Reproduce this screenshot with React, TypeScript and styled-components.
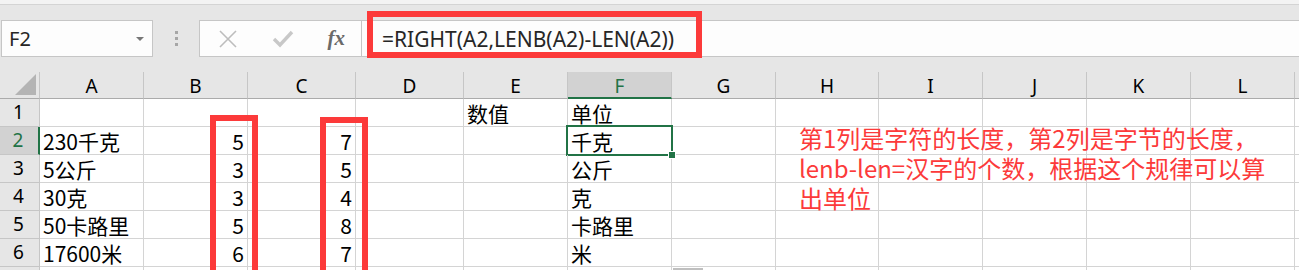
import styled, { createGlobalStyle } from "styled-components";

const GlobalStyle = createGlobalStyle`
  html, body {
    margin: 0;
    padding: 0;
    background: #ffffff;
  }
  body {
    font-family: "Noto Sans", "Noto Sans CJK SC", sans-serif;
  }
`;

const GREEN = "#217346";
const RED = "#fc3a3a";

// 列宽 (含右侧网格线)
const colWidths = [40, 104, 104, 108, 108, 104, 104, 104, 103, 104, 104, 104, 104];
const letters = ["A", "B", "C", "D", "E", "F", "G", "H", "I", "J", "K", "L", ""];

type Row = { a?: string; b?: string; c?: string; e?: string; f?: string };

const rows: Row[] = [
    { e: "数值", f: "单位" },
    { a: "230千克", b: "5", c: "7", f: "千克" },
    { a: "5公斤", b: "3", c: "5", f: "公斤" },
    { a: "30克", b: "3", c: "4", f: "克" },
    { a: "50卡路里", b: "5", c: "8", f: "卡路里" },
    { a: "17600米", b: "6", c: "7", f: "米" },
    {},
];

export default function App() {
    return (
        <Page>
            <GlobalStyle />
            <TopStrip />
            <FormulaRow>
                <NameBox>
                    <span>F2</span>
                    <DropArrow />
                </NameBox>
                <Grip>
                    <i />
                    <i />
                    <i />
                </Grip>
                <FxButtons>
                    <svg width="20" height="20" viewBox="0 0 20 20">
                        <path d="M2 2 L18 18 M18 2 L2 18" stroke="#bdbdbd" strokeWidth="1.6" fill="none" />
                    </svg>
                    <svg width="22" height="20" viewBox="0 0 22 20">
                        <path d="M2 10 L8 16 L20 3" stroke="#c8c8c8" strokeWidth="3.4" fill="none" />
                    </svg>
                    <FxLabel>fx</FxLabel>
                </FxButtons>
                <FormulaInput>
                    <FormulaText>=RIGHT(A2,LENB(A2)-LEN(A2))</FormulaText>
                    <FormulaMark />
                </FormulaInput>
            </FormulaRow>

            <SheetWrap>
                <Sheet>
                    <Corner>
                        <svg width="21" height="21" viewBox="0 0 21 21">
                            <polygon points="21,0 21,21 0,21" fill="#b4b4b4" />
                        </svg>
                    </Corner>
                    {letters.map((l, i) => (
                        <ColHeader key={"h" + i} $active={l === "F"}>
                            {l}
                        </ColHeader>
                    ))}

                    {rows.map((r, ri) => {
                        const n = ri + 1;
                        return [
                            <RowHeader key={"r" + n} $active={n === 2}>
                                {n < 7 ? n : ""}
                            </RowHeader>,
                            <Cell key={n + "a"}>{r.a}</Cell>,
                            <Cell key={n + "b"} $right>
                                {r.b}
                            </Cell>,
                            <Cell key={n + "c"} $right>
                                {r.c}
                            </Cell>,
                            <Cell key={n + "d"} />,
                            <Cell key={n + "e"}>{r.e}</Cell>,
                            <Cell key={n + "f"} $selected={n === 2}>
                                {r.f}
                            </Cell>,
                            <Cell key={n + "g"} />,
                            <Cell key={n + "h"} />,
                            <Cell key={n + "i"} />,
                            <Cell key={n + "j"} />,
                            <Cell key={n + "k"} />,
                            <Cell key={n + "l"} />,
                            <Cell key={n + "m"} />,
                        ];
                    })}
                </Sheet>

                <RedBox $left={210} $top={43} />
                <RedBox $left={320} $top={45} />
                <Note>
                    <div>第1列是字符的长度，第2列是字节的长度，</div>
                    <div>lenb-len=汉字的个数，根据这个规律可以算</div>
                    <div>出单位</div>
                </Note>
                <QuickTab />
            </SheetWrap>
        </Page>
    );
}

const Page = styled.div`
    width: 1299px;
    height: 270px;
    overflow: hidden;
    background: #e6e6e6;
    display: flex;
    flex-direction: column;
`;

const TopStrip = styled.div`
    flex-shrink: 0;
    height: 4px;
    background: #f3f3f3;
    border-bottom: 1px solid #d4d4d4;
`;

const FormulaRow = styled.div`
    flex-shrink: 0;
    display: flex;
    align-items: stretch;
    height: 37px;
    padding: 15px 0 15px 1px;
    background: #e6e6e6;
`;

const NameBox = styled.div`
    box-sizing: border-box;
    width: 152px;
    display: flex;
    align-items: center;
    justify-content: space-between;
    padding: 0 8px 0 7px;
    background: #fdfdfd;
    border: 1px solid #c6c6c6;
    font-family: "Noto Sans", sans-serif;
    font-size: 20px;
    color: #262626;
`;

const DropArrow = styled.span`
    width: 0;
    height: 0;
    border-left: 4px solid transparent;
    border-right: 4px solid transparent;
    border-top: 4px solid #777777;
`;

const Grip = styled.div`
    width: 46px;
    display: flex;
    flex-direction: column;
    align-items: center;
    justify-content: center;
    gap: 3px;

    i {
        width: 3px;
        height: 3px;
        background: #a6a6a6;
    }
`;

const FxButtons = styled.div`
    box-sizing: border-box;
    width: 163px;
    display: flex;
    align-items: center;
    justify-content: space-between;
    padding: 0 16px 0 18px;
    background: #fdfdfd;
    border: 1px solid #c6c6c6;
`;

const FxLabel = styled.span`
    font-family: "Liberation Serif", serif;
    font-style: italic;
    font-weight: bold;
    font-size: 21px;
    color: #6a6a6a;
`;

const FormulaInput = styled.div`
    position: relative;
    flex: 1;
    display: flex;
    align-items: center;
    padding-left: 20px;
    background: #fdfdfd;
    border-top: 1px solid #c6c6c6;
    border-bottom: 1px solid #c6c6c6;
`;

const FormulaText = styled.span`
    font-family: "Noto Sans", sans-serif;
    font-size: 21px;
    color: #262626;
`;

const FormulaMark = styled.div`
    position: absolute;
    left: 5px;
    top: -10px;
    width: 335px;
    height: 47px;
    box-sizing: border-box;
    border: 6px solid ${RED};
`;

const SheetWrap = styled.div`
    position: relative;
    flex: 1;
    min-height: 0;
    overflow: hidden;
    background: #ffffff;
`;

const Sheet = styled.div`
    display: grid;
    grid-template-columns: ${colWidths.map((w) => w + "px").join(" ")} 1fr;
    grid-template-rows: 27px repeat(7, 28px);
`;

const Corner = styled.div`
    box-sizing: border-box;
    background: #e6e6e6;
    border-right: 1px solid #c6c6c6;
    border-bottom: 1px solid #ababab;
    display: flex;
    align-items: flex-end;
    justify-content: flex-end;
    padding: 0 3px 3px 0;
`;

const ColHeader = styled.div<{ $active?: boolean }>`
    box-sizing: border-box;
    display: flex;
    align-items: center;
    justify-content: center;
    padding-top: 2px;
    background: ${(p) => (p.$active ? "#d2d2d2" : "#e6e6e6")};
    color: ${(p) => (p.$active ? GREEN : "#000")};
    border-right: 1px solid #c6c6c6;
    border-bottom: ${(p) => (p.$active ? `2px solid ${GREEN}` : "1px solid #ababab")};
    font-family: "Noto Sans", sans-serif;
    font-size: 19px;
`;

const RowHeader = styled.div<{ $active?: boolean }>`
    box-sizing: border-box;
    display: flex;
    align-items: flex-end;
    justify-content: center;
    padding: 0 2px 1px 0;
    background: ${(p) => (p.$active ? "#d2d2d2" : "#e6e6e6")};
    color: ${(p) => (p.$active ? GREEN : "#000")};
    border-right: ${(p) => (p.$active ? `2px solid ${GREEN}` : "1px solid #c6c6c6")};
    border-bottom: 1px solid #c6c6c6;
    font-family: "Noto Sans", sans-serif;
    font-size: 19px;
`;

const Cell = styled.div<{ $right?: boolean; $selected?: boolean }>`
    position: relative;
    box-sizing: border-box;
    display: flex;
    align-items: flex-end;
    justify-content: ${(p) => (p.$right ? "flex-end" : "flex-start")};
    padding: 0 3px 0 3px;
    border-right: 1px solid #d4d4d4;
    border-bottom: 1px solid #d4d4d4;
    font-family: "Noto Sans CJK SC", "Noto Sans", sans-serif;
    font-size: 21px;
    line-height: 26px;
    color: #000;
    white-space: nowrap;

    ${(p) =>
        p.$selected &&
        `
        &::after {
            content: "";
            position: absolute;
            left: -2px;
            top: -2px;
            right: -2px;
            bottom: -2px;
            border: 2px solid ${GREEN};
        }
        &::before {
            content: "";
            position: absolute;
            right: -5px;
            bottom: -5px;
            width: 6px;
            height: 6px;
            background: ${GREEN};
            border: 1px solid #fff;
            z-index: 2;
        }
    `}
`;

const RedBox = styled.div<{ $left: number; $top: number }>`
    position: absolute;
    left: ${(p) => p.$left}px;
    top: ${(p) => p.$top}px;
    width: 48px;
    height: 170px;
    box-sizing: border-box;
    border: 6px solid ${RED};
`;

const Note = styled.div`
    position: absolute;
    left: 799px;
    top: 51px;
    font-family: "Noto Sans CJK SC", sans-serif;
    font-size: 24px;
    line-height: 30px;
    color: ${RED};
    white-space: nowrap;
`;

const QuickTab = styled.div`
    position: absolute;
    left: 673px;
    top: 196px;
    width: 30px;
    height: 3px;
    background: #bfbfbf;
`;
